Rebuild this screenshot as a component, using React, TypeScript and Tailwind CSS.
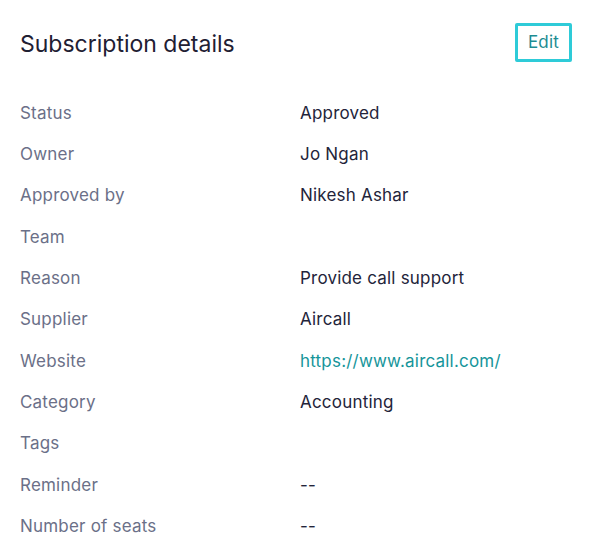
const ROWS: { label: string; value?: string; link?: boolean }[] = [
  { label: "Status", value: "Approved" },
  { label: "Owner", value: "Jo Ngan" },
  { label: "Approved by", value: "Nikesh Ashar" },
  { label: "Team" },
  { label: "Reason", value: "Provide call support" },
  { label: "Supplier", value: "Aircall" },
  { label: "Website", value: "https://www.aircall.com/", link: true },
  { label: "Category", value: "Accounting" },
  { label: "Tags" },
  { label: "Reminder", value: "--" },
  { label: "Number of seats", value: "--" },
];

export default function App() {
  return (
    <div
      className="w-[613px] h-[558px] bg-white pl-5 pr-[41px]"
      style={{ fontFamily: "Inter, 'Noto Sans', sans-serif" }}
    >
      {/* Header */}
      <div className="flex items-center justify-between pt-[23px] h-[62px]">
        <h2 className="text-[23px] leading-[28px] pt-[2px] text-[#1f2033]">Subscription details</h2>
        <button className="h-[39px] px-[10px] border-[3px] border-[#2ecbd8] rounded-[2px] text-[17px] tracking-[0.2px] text-[#1d8c93]">
          Edit
        </button>
      </div>

      {/* Detail rows */}
      <div className="mt-[31px]">
        {ROWS.map((row) => (
          <div key={row.label} className="flex items-center h-[41.3px] text-[17px] tracking-[0.2px]">
            <div className="w-[280px] text-[#6b7088]">{row.label}</div>
            <div className={row.link ? "text-[#16959a]" : "text-[#23243a]"}>
              {row.value}
            </div>
          </div>
        ))}
      </div>
    </div>
  );
}
